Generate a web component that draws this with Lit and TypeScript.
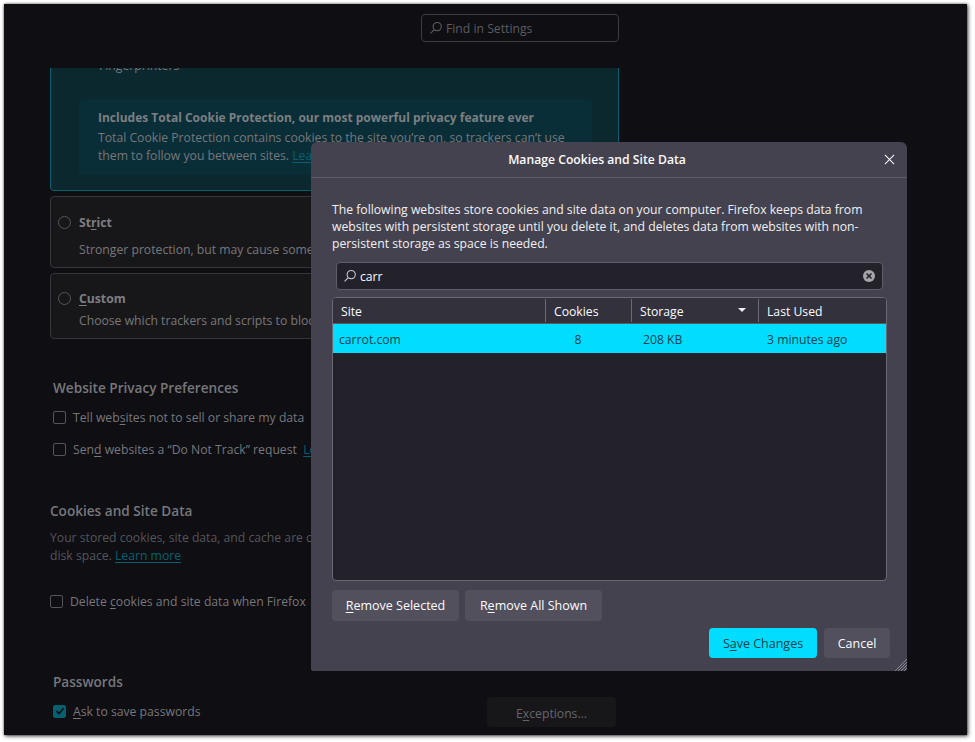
import { LitElement, html, css } from "lit";
import { customElement } from "lit/decorators.js";

@customElement("app-root")
export class AppRoot extends LitElement {
  static styles = css`
    :host { display: block; width: 975px; height: 742px; background: #fff; font-family: "Open Sans", "Noto Sans", sans-serif; font-size: 12.2px; overflow: hidden; }
    u { text-underline-offset: 2px; text-decoration-thickness: 1px; }
    .window { position: relative; margin: 4px 0 0 4px; width: 963px; height: 731px; background: #0e0e13; box-shadow: 1px 1px 4px rgba(0,0,0,.75), 0 0 2px rgba(0,0,0,.4); display: flex; flex-direction: column; overflow: hidden; color: #77777b; }
    .top { height: 64px; flex: none; display: flex; justify-content: flex-end; padding: 10px 348px 0 0; box-sizing: border-box; }
    .find { width: 198px; height: 28px; box-sizing: border-box; border: 1px solid #3b3b40; border-radius: 4px; display: flex; align-items: center; gap: 3px; padding-left: 7px; color: #5c5c60; }
    .scroller { flex: 1; overflow: hidden; padding-left: 46px; width: 615px; box-sizing: content-box; }
    .card { box-sizing: border-box; width: 569px; border-radius: 4px; border: 1px solid #36363a; background: #17171a; margin-bottom: 5px; position: relative; }
    .std { height: 143px; margin-top: -20px; background: #0b282e; border-color: #07606f; padding: 8px 0 0 28px; }
    .fp { margin-left: 20px; line-height: 17px; height: 17px; white-space: nowrap; }
    .note { margin-top: 25px; width: 513px; height: 76px; box-sizing: border-box; border-radius: 4px; background: #0a2e37; padding: 10px 19px; line-height: 17.3px; white-space: nowrap; }
    .note b { display: block; font-weight: 700; color: #7b7f82; margin-bottom: 3px; font-size: 12px; }
    a { color: #07606f; text-decoration: underline; text-underline-offset: 2px; }
    .strict { height: 72px; padding: 14px 0 0 7px; }
    .custom { height: 66px; padding: 13px 0 0 7px; margin-bottom: 0; }
    .r { display: flex; align-items: center; gap: 8px; font-weight: 700; height: 22px; color: #7e7e82; }
    .radio { width: 11px; height: 11px; border: 1.5px solid #55555a; border-radius: 50%; flex: none; }
    .sub { margin: 8px 0 0 21px; white-space: nowrap; line-height: 18px; }
    .custom .sub { margin-top: 3px; }
    h3 { margin: 0; font-size: 13.6px; font-weight: 600; color: #77777b; line-height: 20px; }
    .wpp { margin: 39px 0 0 3px; }
    .chk { display: flex; align-items: center; gap: 7px; height: 20px; white-space: nowrap; }
    .box { width: 11px; height: 11px; border: 1.5px solid #55555a; border-radius: 2px; flex: none; display: flex; align-items: center; justify-content: center; }
    .box.on { background: #07606f; border-color: #07606f; }
    .wpp .chk:first-of-type { margin-top: 9px; }
    .wpp .chk + .chk { margin-top: 12px; }
    .csd { margin-top: 42px; }
    .csd p { margin: 8px 0 0; line-height: 17.5px; color: #55555a; white-space: nowrap; }
    .csd .chk { margin-top: 27px; }
    .pw { margin: 61px 0 0 3px; }
    .pw .chk { margin-top: 9px; }
    .exc { position: absolute; left: 483px; top: 693px; width: 129px; height: 30px; box-sizing: border-box; padding-top: 2px; border-radius: 4px; background: #17171a; color: #66666a; display: flex; align-items: center; justify-content: center; }

    .dialog { position: absolute; left: 307px; top: 138px; width: 596px; height: 529px; box-sizing: border-box; background: #44424e; border-radius: 6px 6px 2px 2px; color: #fbfbfe; display: flex; flex-direction: column; }
    .dh { height: 36px; box-sizing: border-box; flex: none; border-bottom: 1px solid #5c5b66; display: flex; align-items: center; justify-content: center; font-weight: 600; position: relative; padding-right: 24px; }
    .close { position: absolute; right: 12px; top: 12px; width: 11px; height: 11px; }
    .db { flex: 1; display: flex; flex-direction: column; padding: 23px 21px 13px 21px; position: relative; }
    .desc { margin: 0; line-height: 17px; height: 51px; white-space: nowrap; color: #f0f0f4; }
    .search { margin: 10px 3px 0 4px; height: 28px; box-sizing: border-box; background: #23222b; border: 1px solid #5f5e69; border-radius: 4px; display: flex; align-items: center; padding: 0 7px 0 6px; gap: 3px; }
    .search .txt { flex: 1; }
    .clr { width: 12px; height: 12px; border-radius: 50%; background: #a5a5aa; display: flex; align-items: center; justify-content: center; }
    .table { margin-top: 7px; height: 284px; width: 555px; box-sizing: border-box; border: 1px solid #6a6974; border-radius: 4px; background: #23222b; display: flex; flex-direction: column; overflow: hidden; }
    .thead { height: 26px; box-sizing: border-box; flex: none; background: #33323c; display: grid; grid-template-columns: 213px 86px 127px 1fr; align-items: center; border-bottom: 1px solid #5a5964; }
    .th { height: 23px; display: flex; align-items: center; padding: 2px 0 0 8px; box-sizing: border-box; border-right: 1px solid #6a6974; position: relative; }
    .th:last-child { border-right: none; }
    .caret { position: absolute; right: 12px; top: 9px; width: 0; height: 0; border: 4px solid transparent; border-top: 4px solid #f0f0f4; border-bottom: none; }
    .row { height: 29px; box-sizing: border-box; padding-top: 2px; flex: none; background: #00ddff; color: #15404e; display: grid; grid-template-columns: 213px 86px 127px 1fr; align-items: center; }
    .row div:first-child { padding-left: 6px; }
    .row .c2 { text-align: center; padding-right: 22px; box-sizing: border-box; }
    .row .c3 { padding-left: 11px; }
    .row .c4 { padding-left: 8px; }
    .actions { display: flex; gap: 6px; margin-top: 9px; }
    button { font: inherit; font-size: 12.5px; height: 31px; border: 0; border-radius: 4px; background: #52505c; color: #fbfbfe; padding: 0; }
    .rs { width: 127px; } .ra { width: 137px; }
    .foot { display: flex; justify-content: flex-end; gap: 7px; margin: 7px -4px 0 0; }
    .foot button { height: 30px; }
    .save { width: 108px; background: #00ddff; color: #15404e; }
    .cancel { width: 66px; }
    .grip { position: absolute; right: 0; bottom: 0; width: 13px; height: 13px; }
  `;

  private icon(c: string) {
    return html`<svg width="14" height="14" viewBox="0 0 14 14" fill="none" stroke=${c} stroke-width="1.1"><circle cx="8.2" cy="5.6" r="4.1"/><path d="M5.2 8.6 1.6 12.4"/></svg>`;
  }

  render() {
    return html`
      <div class="window">
        <div class="top">
          <div class="find">${this.icon("#5c5c60")}<span>Find in Settings</span></div>
        </div>
        <div class="scroller">
          <div class="card std">
            <div class="fp">Fingerprinters</div>
            <div class="note">
              <b>Includes Total Cookie Protection, our most powerful privacy feature ever</b>
              Total Cookie Protection contains cookies to the site you’re on, so trackers can’t use<br />
              them to follow you between sites. <a>Learn more</a>
            </div>
          </div>
          <div class="card strict">
            <div class="r"><span class="radio"></span><span>St<u>r</u>ict</span></div>
            <div class="sub">Stronger protection, but may cause some</div>
          </div>
          <div class="card custom">
            <div class="r"><span class="radio"></span><span><u>C</u>ustom</span></div>
            <div class="sub">Choose which trackers and scripts to block</div>
          </div>
          <div class="wpp">
            <h3>Website Privacy Preferences</h3>
            <div class="chk"><span class="box"></span><span>Tell web<u>s</u>ites not to sell or share my data</span></div>
            <div class="chk"><span class="box"></span><span>Sen<u>d</u> websites a “Do Not Track” request &nbsp;<a>Learn more</a></span></div>
          </div>
          <div class="csd">
            <h3>Cookies and Site Data</h3>
            <p>Your stored cookies, site data, and cache are currently<br />disk space. <a>Learn more</a></p>
            <div class="chk"><span class="box"></span><span>Delete <u>c</u>ookies and site data when Firefox</span></div>
          </div>
          <div class="pw">
            <h3>Passwords</h3>
            <div class="chk"><span class="box on"><svg width="10" height="10" viewBox="0 0 10 10" fill="none" stroke="#0e0e13" stroke-width="1.6"><path d="M1.5 5.2 4 7.6 8.6 2.2"/></svg></span><span><u>A</u>sk to save passwords</span></div>
          </div>
        </div>
        <div class="exc"><span>E<u>x</u>ceptions…</span></div>

        <div class="dialog">
          <div class="dh">Manage Cookies and Site Data
            <svg class="close" viewBox="0 0 12 12" fill="none" stroke="#fbfbfe" stroke-width="1.1"><path d="M1 1l10 10M11 1 1 11"/></svg>
          </div>
          <div class="db">
            <p class="desc">The following websites store cookies and site data on your computer. Firefox keeps data from<br />websites with persistent storage until you delete it, and deletes data from websites with non-<br />persistent storage as space is needed.</p>
            <div class="search">${this.icon("#c8c8cc")}<span class="txt">carr</span>
              <span class="clr"><svg width="8" height="8" viewBox="0 0 8 8" fill="none" stroke="#23222b" stroke-width="1.6"><path d="M1.5 1.5l5 5M6.5 1.5l-5 5"/></svg></span>
            </div>
            <div class="table">
              <div class="thead">
                <div class="th">Site</div><div class="th">Cookies</div>
                <div class="th">Storage<span class="caret"></span></div><div class="th">Last Used</div>
              </div>
              <div class="row"><div>carrot.com</div><div class="c2">8</div><div class="c3">208 KB</div><div class="c4">3 minutes ago</div></div>
            </div>
            <div class="actions">
              <button class="rs"><u>R</u>emove Selected</button>
              <button class="ra">R<u>e</u>move All Shown</button>
            </div>
            <div class="foot">
              <button class="save">S<u>a</u>ve Changes</button>
              <button class="cancel">Cancel</button>
            </div>
          </div>
          <svg class="grip" viewBox="0 0 13 13" stroke="#8a8993" stroke-width="1"><path d="M13 1 1 13M13 4 4 13M13 7 7 13M13 10 10 13"/></svg>
        </div>
      </div>
    `;
  }
}
